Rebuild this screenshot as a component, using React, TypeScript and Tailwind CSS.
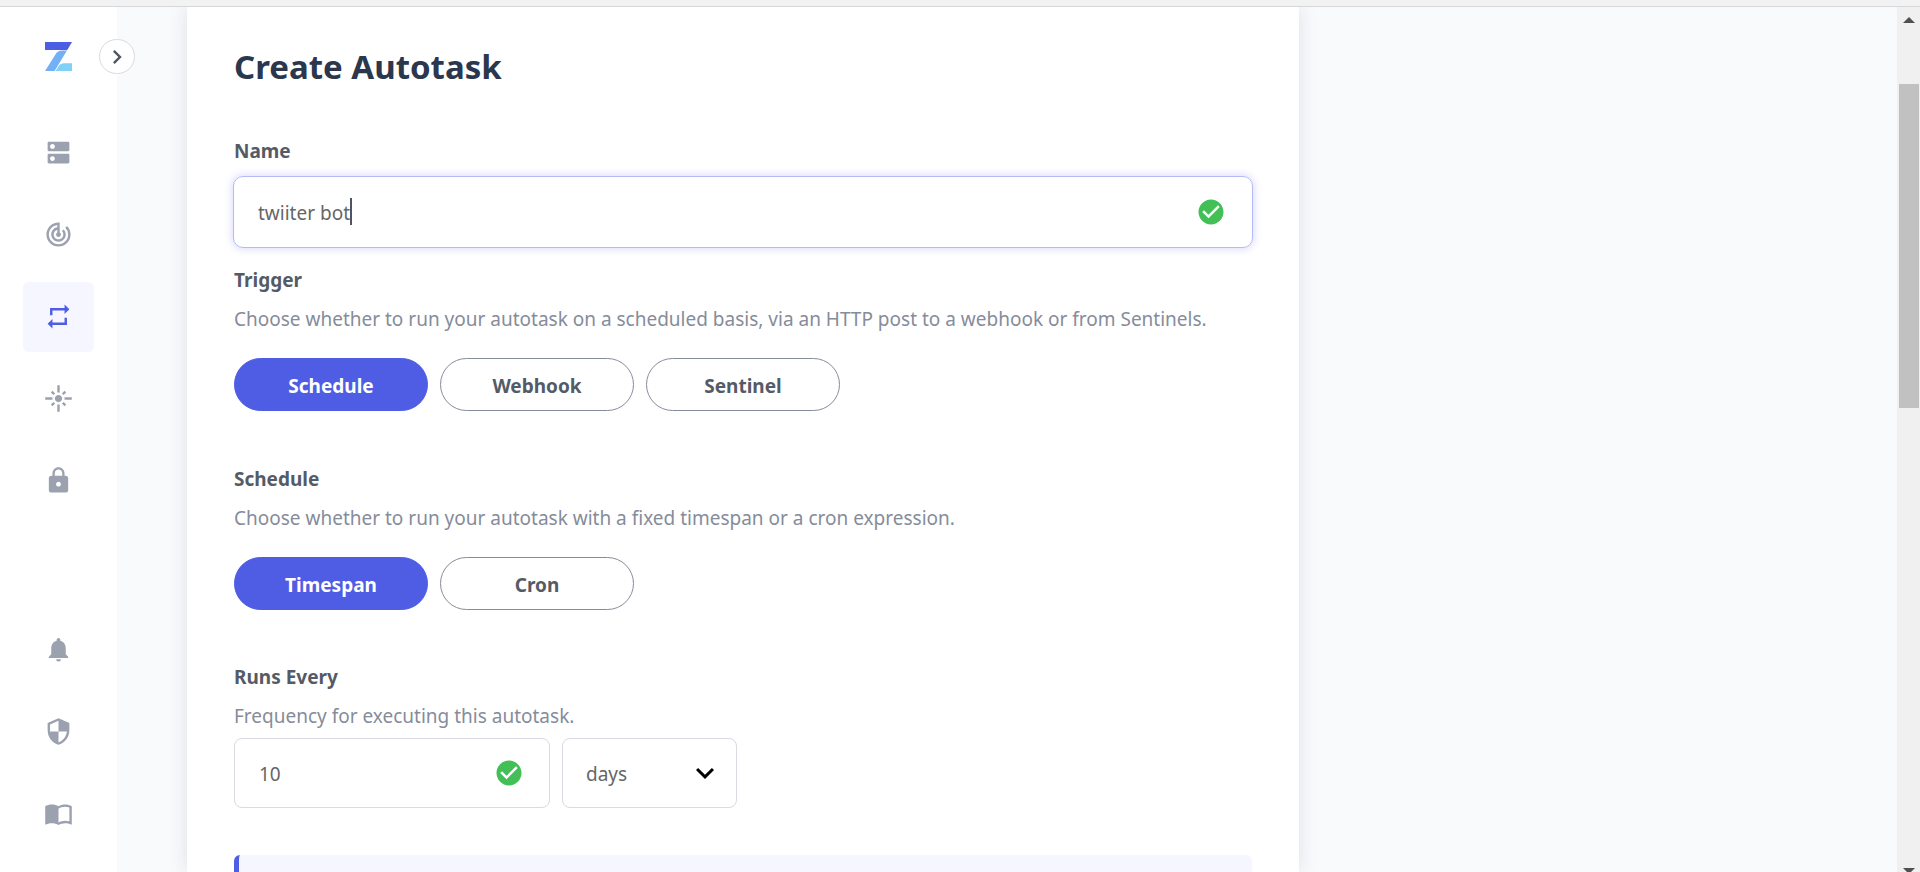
import { useState } from 'react';
import type { ReactNode } from 'react';
import type { IconType } from 'react-icons';
import {
  MdCheckCircle,
  MdChevronRight,
  MdDns,
  MdExpandMore,
  MdFlare,
  MdImportContacts,
  MdLock,
  MdNotifications,
  MdRepeat,
  MdSecurity,
  MdTrackChanges,
} from 'react-icons/md';

type NavItem = { label: string; icon: IconType; active?: boolean };

const mainNav: NavItem[] = [
  { label: 'Contracts', icon: MdDns },
  { label: 'Sentinels', icon: MdTrackChanges },
  { label: 'Autotasks', icon: MdRepeat, active: true },
  { label: 'Relayers', icon: MdFlare },
  { label: 'Secrets', icon: MdLock },
];

const footerNav: NavItem[] = [
  { label: 'Notifications', icon: MdNotifications },
  { label: 'Security', icon: MdSecurity },
  { label: 'Documentation', icon: MdImportContacts },
];

function NavList({ items }: { items: NavItem[] }) {
  return (
    <ul className="flex flex-col gap-3">
      {items.map(({ label, icon: Icon, active }) => (
        <li key={label}>
          <a
            href="#"
            aria-label={label}
            className={
              active
                ? 'flex h-[70px] w-[71px] items-center justify-center rounded-md bg-[#f5f6ff] pb-px text-[#4e5de4]'
                : 'flex h-[70px] w-[71px] items-center justify-center rounded-md pb-px text-[#9ba1ae]'
            }
          >
            <Icon size={29} />
          </a>
        </li>
      ))}
    </ul>
  );
}

function Logo() {
  return (
    <svg width="27" height="29" viewBox="0 0 27 29" aria-hidden="true">
      <path d="M0 0h27l-4.7 8H0z" fill="#4e5ee4" />
      <path d="M22 8.6 9.6 29H0L10.6 12.2Q12.8 8.6 17 8.6z" fill="#73b0f5" />
      <path d="M10.6 29l3.2-5.2Q15.3 21.3 18.5 21.3H27V29z" fill="#7fd1f8" />
    </svg>
  );
}

function Sidebar() {
  return (
    <aside className="relative flex w-[117px] shrink-0 flex-col items-center justify-between bg-white pt-[35px] pb-[23px]">
      <div className="flex flex-col items-center gap-[47px]">
        <Logo />
        <NavList items={mainNav} />
      </div>
      <NavList items={footerNav} />
      <button
        type="button"
        aria-label="Expand sidebar"
        className="absolute top-8 -right-[18px] flex h-[35px] w-9 items-center justify-center rounded-full border border-[#d9dae2] bg-white text-[#4f5462]"
      >
        <MdChevronRight size={28} />
      </button>
    </aside>
  );
}

function Heading({ id, title, help }: { id: string; title: string; help: string }) {
  return (
    <div className="flex flex-col gap-[11px]">
      <h2 id={id} className="leading-7 font-bold text-[#555b66]">
        {title}
      </h2>
      <p className="leading-7 text-[#858c9b]">{help}</p>
    </div>
  );
}

function PillGroup({ labelledBy, options }: { labelledBy: string; options: string[] }) {
  const [selected, setSelected] = useState(options[0]);
  return (
    <div role="group" aria-labelledby={labelledBy} className="mt-[25px] flex gap-3">
      {options.map((option) => (
        <button
          key={option}
          type="button"
          aria-pressed={option === selected}
          onClick={() => setSelected(option)}
          className={
            option === selected
              ? 'h-[53px] w-[194px] rounded-full border border-[#4e5de4] bg-[#4e5de4] pt-1 font-bold text-white'
              : 'h-[53px] w-[194px] rounded-full border border-[#858c9b] bg-white pt-1 font-bold text-[#555b66]'
          }
        >
          {option}
        </button>
      ))}
    </div>
  );
}

function ValidField({ className, children }: { className: string; children: ReactNode }) {
  return (
    <div className={className}>
      {children}
      <MdCheckCircle size={30} className="shrink-0 text-[#42c056]" />
    </div>
  );
}

function Scrollbar() {
  return (
    <div aria-hidden="true" className="flex w-[23px] shrink-0 flex-col items-center bg-[#f0f0f0] pt-[10px]">
      <svg width="12" height="6" viewBox="0 0 12 6">
        <path d="M0 6 6 0l6 6z" fill="#505050" />
      </svg>
      <div className="mt-[61px] h-[324px] w-5 bg-[#c1c1c1]" />
      <svg width="12" height="6" viewBox="0 0 12 6" className="mt-auto -mb-0.5 shrink-0">
        <path d="M0 0h12L6 6z" fill="#505050" />
      </svg>
    </div>
  );
}

export default function App() {
  const [name, setName] = useState('twiiter bot');
  const [every, setEvery] = useState('10');

  return (
    <div className="flex h-screen flex-col overflow-hidden bg-[#f9fafc] font-['Noto_Sans','Open_Sans',sans-serif] text-[19px]">
      <div className="h-[7px] shrink-0 border-b border-[#d5d7d9] bg-[#f2f2f2]" />
      <div className="flex min-h-0 flex-1">
        <Sidebar />
        <main className="flex min-w-0 flex-1 overflow-hidden pl-[70px]">
          <form className="w-full max-w-[1112px] bg-white px-[47px] pt-10 shadow-[0_0_18px_rgba(40,45,60,0.12)]">
            <h1 className="text-[33px] leading-10 font-bold text-[#2b374d]">Create Autotask</h1>

            <label htmlFor="name" className="mt-[50px] block leading-7 font-bold text-[#555b66]">
              Name
            </label>
            <ValidField className="relative -mx-px mt-[11px] flex h-[72px] items-center rounded-[10px] border border-[#b4baf6] pr-[26px] pl-6 shadow-[0_0_8px_1px_#dadafb]">
              <input
                id="name"
                value={name}
                onChange={(e) => setName(e.target.value)}
                className="min-w-0 flex-1 pt-0.5 text-[#666666] outline-none"
              />
              <span aria-hidden="true" className="absolute top-[21px] left-[116px] h-[27px] w-0.5 bg-[#4f5462]" />
            </ValidField>

            <section className="mt-[18px]">
              <Heading
                id="trigger"
                title="Trigger"
                help="Choose whether to run your autotask on a scheduled basis, via an HTTP post to a webhook or from Sentinels."
              />
              <PillGroup labelledBy="trigger" options={['Schedule', 'Webhook', 'Sentinel']} />
            </section>

            <section className="mt-[54px]">
              <Heading
                id="schedule"
                title="Schedule"
                help="Choose whether to run your autotask with a fixed timespan or a cron expression."
              />
              <PillGroup labelledBy="schedule" options={['Timespan', 'Cron']} />
            </section>

            <section className="mt-[53px]">
              <Heading id="runs-every" title="Runs Every" help="Frequency for executing this autotask." />
              <div className="mt-2 flex gap-3">
                <ValidField className="flex h-[70px] w-[316px] items-center rounded-lg border border-[#d9dae2] pr-[25px] pl-6">
                  <input
                    aria-labelledby="runs-every"
                    value={every}
                    onChange={(e) => setEvery(e.target.value)}
                    className="min-w-0 flex-1 pt-0.5 text-[#666666] outline-none"
                  />
                </ValidField>
                <div className="relative w-[175px]">
                  <select
                    aria-label="Time unit"
                    defaultValue="days"
                    className="h-[70px] w-full appearance-none rounded-lg border border-[#d9dae2] bg-white pt-0.5 pl-[23px] text-[#666666] outline-none"
                  >
                    <option>minutes</option>
                    <option>hours</option>
                    <option>days</option>
                  </select>
                  <MdExpandMore size={36} className="pointer-events-none absolute top-[17px] right-[14px] text-black" />
                </div>
              </div>
            </section>

            <div className="mt-[47px] h-32 rounded-md border-l-[5px] border-[#4e5de4] bg-[#f5f6ff]" />
          </form>
        </main>
        <Scrollbar />
      </div>
    </div>
  );
}
